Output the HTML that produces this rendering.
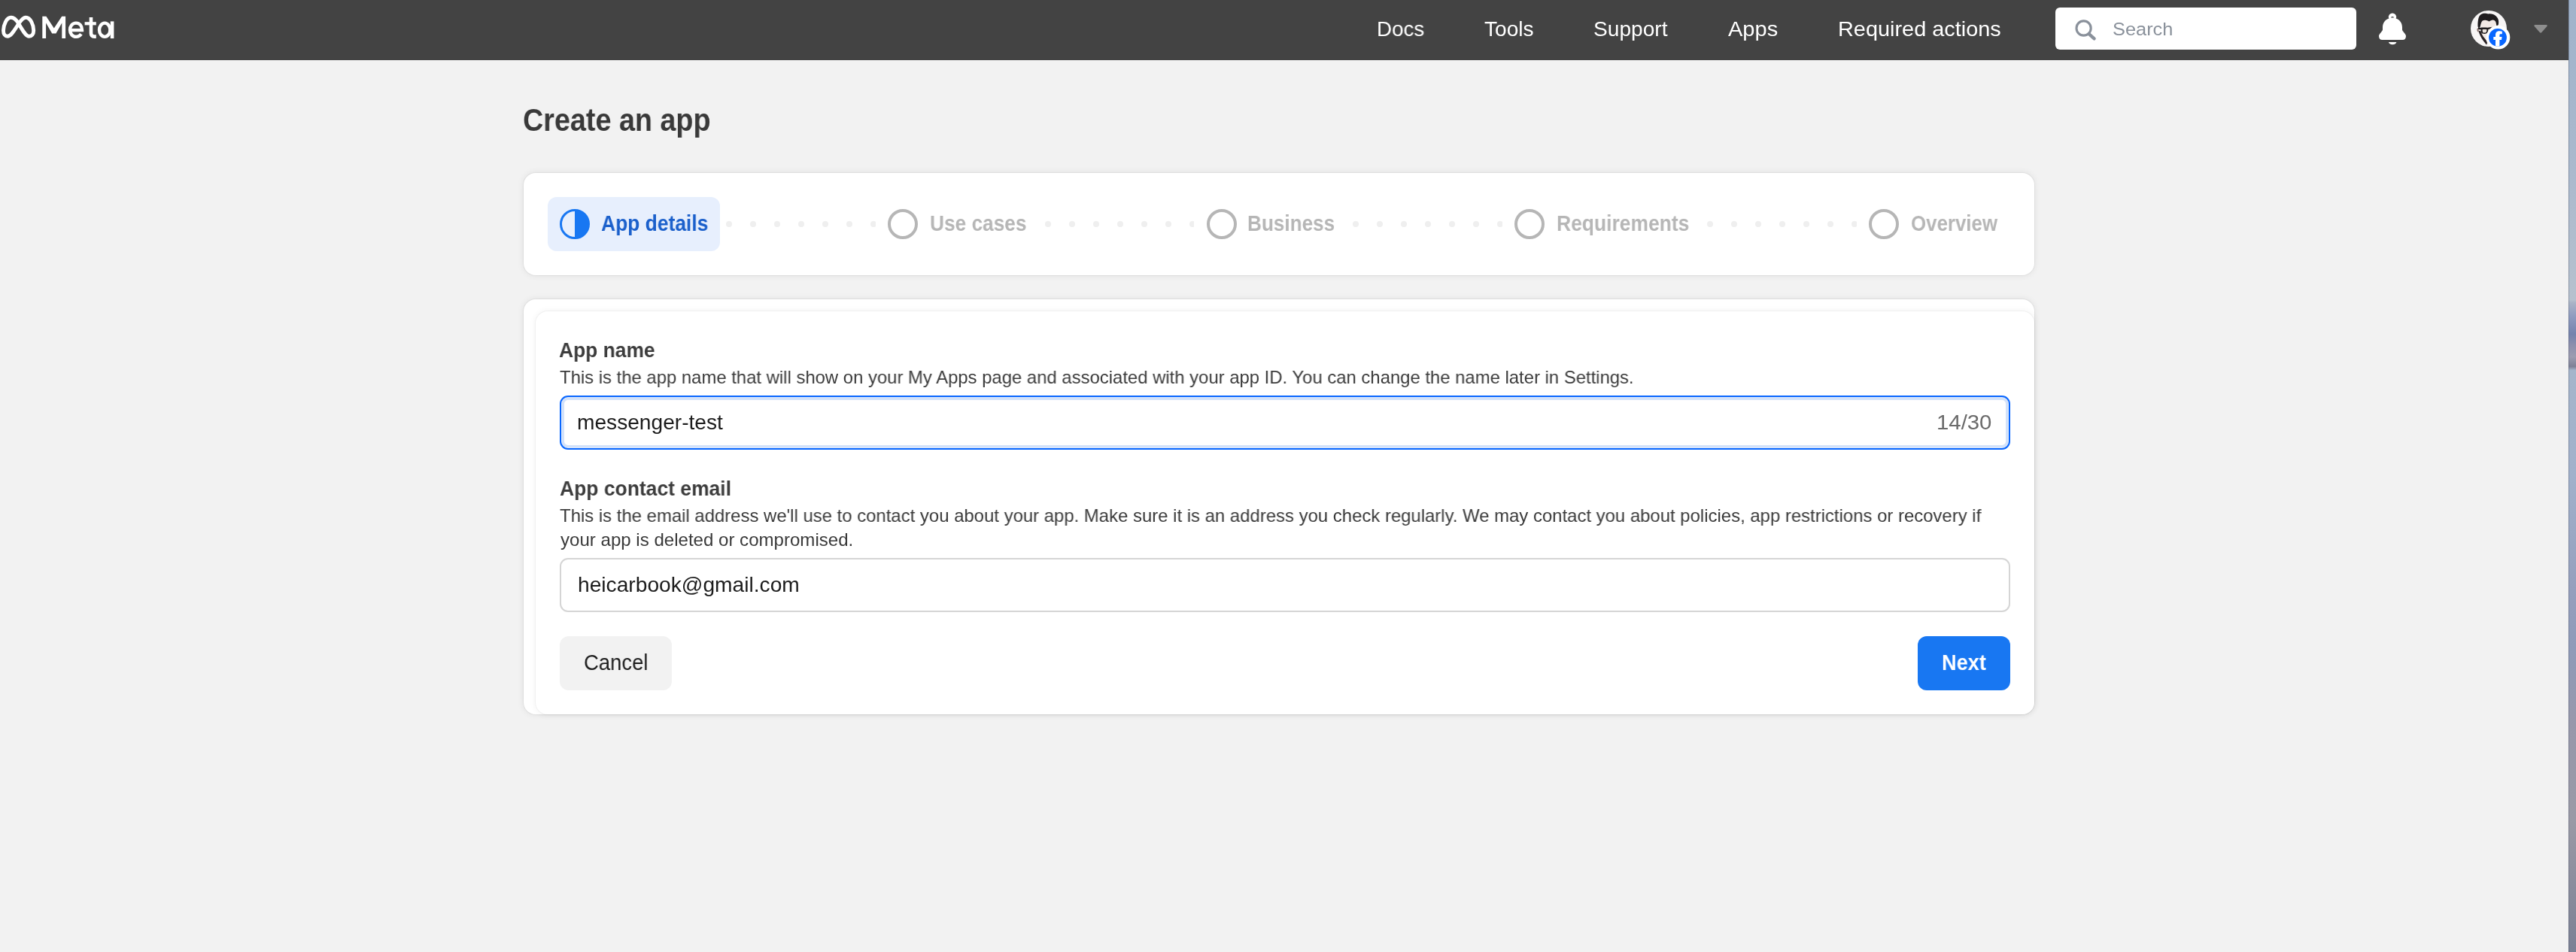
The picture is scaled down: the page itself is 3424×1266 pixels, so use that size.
<!DOCTYPE html>
<html><head><meta charset="utf-8">
<style>
*{box-sizing:border-box;margin:0;padding:0}
html,body{width:3424px;height:1266px;overflow:hidden;background:#f2f2f2;font-family:"Liberation Sans",sans-serif;position:relative}
.a{position:absolute;white-space:nowrap;line-height:0;transform-origin:0 0;will-change:transform}
.b{position:absolute}
#nav{position:absolute;left:0;top:0;width:3414px;height:80px;background:#434343}
#strip{position:absolute;left:3414px;top:0;width:10px;height:1266px;border-left:1px solid rgba(60,70,90,0.35);background:linear-gradient(180deg,#a0b3cb 0%,#aab9cd 18%,#b6c1ce 31.5%,#a9b3c6 31.8%,#8f9cc0 33.2%,#7583ad 35.1%,#8d90ad 36.3%,#9c9cb0 37.5%,#7d8096 38.5%,#a5b5cb 38.9%,#a1b1cb 50%,#959fbd 62%,#8f9bb9 68%,#9798ab 76%,#9a9aa6 86%,#7b8094 100%)}
.card{position:absolute;background:#fff;border-radius:16px;box-shadow:0 0 0 1px rgba(0,0,0,0.04),0 0 10px rgba(0,0,0,0.085)}
.inner{position:absolute;background:#fff;border-radius:16px;box-shadow:0 0 0 1px rgba(0,0,0,0.03),0 0 10px rgba(0,0,0,0.065)}
.ring{position:absolute;width:40px;height:40px;border:4px solid #b6b6b6;border-radius:50%}
.drow{position:absolute;top:293.8px;height:8px;overflow:hidden}
.drow i{position:absolute;top:0;width:8px;height:8px;border-radius:50%;background:#efefef}
</style></head><body>
<div id="nav"></div>
<div id="strip"></div>
<svg class="b" style="left:0;top:0" width="60" height="80" viewBox="0 0 60 80">
<path d="M10 48.3 C14.5 48.3 18 42 24.8 31.5 C28.5 26 31 23.2 34.3 23.2 C40.5 23.2 44.7 33 44.7 40.5 C44.7 45.5 42.2 48.3 38.8 48.3 C34.5 48.3 31 42 24.8 31.5 C21.5 26 18.5 23.3 14.7 23.3 C8.5 23.3 4.5 33.5 4.5 40.5 C4.5 45.5 7 48.3 10 48.3 Z" fill="none" stroke="#fff" stroke-width="4.9" stroke-linejoin="round"/>
</svg>
<svg class="b" style="left:50px;top:15px" width="110" height="45" viewBox="50 15 110 45">
<path d="M56.3 51.1 V21.7 H61.4 L71.8 37.6 L82.2 21.7 H87.1 V51.1 H82.3 V30.4 L74.4 44.4 H69.2 L61.1 30.4 V51.1 Z" fill="#fff"/>
<path d="M93.2 40.1 H109 C109 34.4 105.8 30.6 101 30.6 C96.1 30.6 93 34.8 93 39.8 C93 44.8 96.3 48.9 101.2 48.9 C104.1 48.6 106.4 47.4 107.9 45.2" fill="none" stroke="#fff" stroke-width="4.4"/>
<path d="M121 23 V44.3 C121 47.4 122.5 48.6 125.3 48.6 H127.8" fill="none" stroke="#fff" stroke-width="4.6"/>
<path d="M112.6 31.3 H127.8" fill="none" stroke="#fff" stroke-width="4.2"/>
<ellipse cx="139.2" cy="39.75" rx="7.2" ry="9.1" fill="none" stroke="#fff" stroke-width="4.4"/>
<path d="M149.1 28.4 V51.1" fill="none" stroke="#fff" stroke-width="4.6"/>
</svg>
<div class="a" style="left:1829.63px;top:39.2px;font-size:28px;font-weight:400;color:#fff;transform:scaleX(0.9912)">Docs</div>
<div class="a" style="left:1973.24px;top:39.2px;font-size:28px;font-weight:400;color:#fff;transform:scaleX(1.0049)">Tools</div>
<div class="a" style="left:2117.98px;top:39.2px;font-size:28px;font-weight:400;color:#fff;transform:scaleX(1.0041)">Support</div>
<div class="a" style="left:2297.15px;top:39.2px;font-size:28px;font-weight:400;color:#fff;transform:scaleX(1.0372)">Apps</div>
<div class="a" style="left:2443.08px;top:39.2px;font-size:28px;font-weight:400;color:#fff;transform:scaleX(1.0318)">Required actions</div>
<div class="b" style="left:2732px;top:10px;width:400px;height:56px;background:#fff;border-radius:6px"></div>
<svg class="b" style="left:2750px;top:18px" width="44" height="44" viewBox="0 0 44 44">
<circle cx="19.6" cy="19.5" r="9.6" fill="none" stroke="#8a919b" stroke-width="3.1"/>
<line x1="26.6" y1="27.2" x2="33.6" y2="33.4" stroke="#8a919b" stroke-width="4.4" stroke-linecap="round"/>
</svg>
<div class="a" style="left:2807.95px;top:39.2px;font-size:24.5px;font-weight:400;color:#8a919b;transform:scaleX(1.0362)">Search</div>
<svg class="b" style="left:3150px;top:10.8px" width="60" height="56" viewBox="0 0 60 56">
<circle cx="30" cy="11.6" r="5.2" fill="#fff"/>
<path d="M24.7 13.8 C20 15.5 17 20 17 25.5 L17 28.5 C17 30.5 12 34 12 37 C12 40 13.5 42 16.5 42 L43.5 42 C46.5 42 48 40 48 37 C48 34 43 30.5 43 28.5 L43 25.5 C43 20 40 15.5 35.3 13.8 Z" fill="#fff"/>
<path d="M28 12.6 A2 1.6 0 0 1 32 12.6 Z" fill="#434343"/>
<path d="M25 45 H35.3 C35.3 47 33 48.2 30.15 48.2 C27.3 48.2 25 47 25 45 Z" fill="#fff"/>
</svg>
<svg class="b" style="left:3284px;top:13.7px" width="48" height="48" viewBox="0 0 48 48">
<defs><clipPath id="av"><circle cx="24" cy="24" r="24"/></clipPath></defs>
<g clip-path="url(#av)">
<rect width="48" height="48" fill="#f7f5f5"/>
<path d="M14 12 C18 11 30 11 34.5 13 L34.5 30 C33 38 28 44 22 45 C17 41 14 34 13.5 28 Z" fill="#f2e9e5"/>
<path d="M9.5 21.2 C9.3 16 10 9 12.2 6.4 C14 4.5 16 3.7 17.6 3.7 C20 3.5 22 4.4 23.6 4.4 C26 4.2 28 4.5 29.7 5.1 C32 6 34 7.5 35 9.1 C36.5 11 37.2 13 37.1 14.5 C37.3 16 37 18 36.7 19.2 L34.4 20.5 C34 18 33.8 16 33 14.5 C32 13.2 31 12.5 29.7 12.5 C27.5 12.6 26 13.8 24.3 14.5 C22.5 13.6 20.5 12.6 18.9 12.8 C17 13 15.5 13.6 14.9 14.5 C13.8 16.5 13.2 19 12.8 21.2 L10.8 23.9 Z" fill="#1f1c1e"/>
<path d="M9.3 23.5 C12 22.6 18 22.2 22.5 22.8 C24.5 22.4 26.5 22 28.5 21.8 L28.5 24.2 L23.4 25 C23.2 27.5 22.8 29.2 21.8 30 C19.5 31.2 16 31.2 14.6 30 C13.8 28.8 13.6 26.8 13.5 25.2 L10 25.3 Z" fill="#1f1c1e"/>
<path d="M15.6 25.2 C17 24.8 20 24.8 21.4 25.3 C21.4 27 21.1 28.3 20.6 28.9 C19.3 29.6 17 29.6 16.1 28.9 C15.7 28 15.6 26.6 15.6 25.2 Z" fill="#ebe3dc"/>
<path d="M10.2 25.9 C11 27 12.5 27.2 13.6 27.3 C14.3 31 16 34 18.2 36.5 C19.8 38.3 21.5 40.5 22 43 L21 45.5 C18 42 15 38 12.8 33.5 C11.5 31 10.6 28.5 10.2 25.9 Z" fill="#2a2325"/>
<path d="M9 23.8 C8 24.5 8.2 27 9.6 28.6 L10.6 28.2 L10.2 24.5 Z" fill="#8a6f68"/>
</g>
</svg>
<svg class="b" style="left:3300px;top:30px" width="40" height="40" viewBox="0 0 40 40">
<defs><clipPath id="fb"><circle cx="20" cy="19.9" r="11.9"/></clipPath></defs>
<circle cx="20.5" cy="19.8" r="15.8" fill="#fff"/>
<circle cx="20" cy="19.9" r="11.9" fill="#0866ff"/>
<path clip-path="url(#fb)" d="M17 33 V23 H14.3 V19 H17 V16.5 C17 13 19 11.3 22.5 11.3 C23.8 11.3 25 11.5 25.8 11.7 V15.3 H24 C22.8 15.3 22.4 15.9 22.4 17 V19 H25.6 L25 23 H22.4 V33 Z" fill="#fff"/>
</svg>
<svg class="b" style="left:3364px;top:29px" width="26" height="18" viewBox="0 0 26 18">
<path d="M5.6 4 H20.6 C21.7 4 22.2 5.1 21.5 5.9 L14.1 14.3 C13.5 14.9 12.6 14.9 12 14.3 L4.7 5.9 C4 5.1 4.5 4 5.6 4 Z" fill="#8e8e8e"/>
</svg>

<div class="a" style="left:695.4px;top:160.3px;font-size:42.3px;font-weight:700;color:#393939;transform:scaleX(0.8917)">Create an app</div>

<div class="card" style="left:696px;top:230px;width:2008px;height:136px"></div>
<div class="b" style="left:728px;top:262px;width:229px;height:72px;border-radius:12px;background:#e7effd"></div>
<svg class="b" style="left:744px;top:278px" width="40" height="40" viewBox="0 0 40 40">
<circle cx="20" cy="20" r="18.5" fill="none" stroke="#1877f2" stroke-width="3"/>
<path d="M20 1.5 A18.5 18.5 0 0 1 20 38.5 Z" fill="#1877f2"/>
</svg>
<div class="a" style="left:799.21px;top:297.0px;font-size:28.6px;font-weight:700;color:#1a5fcb;transform:scaleX(0.9234)">App details</div>
<div class="ring" style="left:1180px;top:278px"></div>
<div class="a" style="left:1235.79px;top:297.0px;font-size:28.6px;font-weight:700;color:#b6b6b6;transform:scaleX(0.9182)">Use cases</div>
<div class="ring" style="left:1603.5px;top:278px"></div>
<div class="a" style="left:1658.25px;top:297.0px;font-size:28.6px;font-weight:700;color:#b6b6b6;transform:scaleX(0.9133)">Business</div>
<div class="ring" style="left:2013px;top:278px"></div>
<div class="a" style="left:2068.74px;top:297.0px;font-size:28.6px;font-weight:700;color:#b6b6b6;transform:scaleX(0.9247)">Requirements</div>
<div class="ring" style="left:2484px;top:278px"></div>
<div class="a" style="left:2540.09px;top:297.0px;font-size:28.6px;font-weight:700;color:#b6b6b6;transform:scaleX(0.9038)">Overview</div>
<div class="drow" style="left:965px;width:199px"><i style="left:0px"></i><i style="left:32px"></i><i style="left:64px"></i><i style="left:96px"></i><i style="left:128px"></i><i style="left:160px"></i><i style="left:192px"></i></div><div class="drow" style="left:1389px;width:198px"><i style="left:0px"></i><i style="left:32px"></i><i style="left:64px"></i><i style="left:96px"></i><i style="left:128px"></i><i style="left:160px"></i><i style="left:192px"></i></div><div class="drow" style="left:1798px;width:199px"><i style="left:0px"></i><i style="left:32px"></i><i style="left:64px"></i><i style="left:96px"></i><i style="left:128px"></i><i style="left:160px"></i><i style="left:192px"></i></div><div class="drow" style="left:2269px;width:199px"><i style="left:0px"></i><i style="left:32px"></i><i style="left:64px"></i><i style="left:96px"></i><i style="left:128px"></i><i style="left:160px"></i><i style="left:192px"></i></div>

<div class="card" style="left:696px;top:398px;width:2008px;height:552px"></div>
<div class="inner" style="left:712px;top:414px;width:1992px;height:536px"></div>
<div class="a" style="left:743.21px;top:465.8px;font-size:28px;font-weight:700;color:#3c3c3c;transform:scaleX(0.9422)">App name</div>
<div class="a" style="left:744.42px;top:501.6px;font-size:24px;font-weight:400;color:#3a3a3a;transform:scaleX(0.9945)">This is the app name that will show on your My Apps page and associated with your app ID. You can change the name later in Settings.</div>
<div class="b" style="left:744px;top:526px;width:1928px;height:72px;border-radius:11px;border:2px solid #0866ff;box-shadow:inset 0 0 0 0.5px #e6eefc,inset 0 0 0 4px #d3e2fa"></div>
<div class="a" style="left:767.17px;top:562.4px;font-size:28px;font-weight:400;color:#1c1c1c;transform:scaleX(1.0048)">messenger-test</div>
<div class="a" style="left:2573.84px;top:562.2px;font-size:28px;font-weight:400;color:#6b6b6b;transform:scaleX(1.0476)">14/30</div>
<div class="a" style="left:743.61px;top:650.0px;font-size:28px;font-weight:700;color:#3c3c3c;transform:scaleX(0.9452)">App contact email</div>
<div class="a" style="left:744.32px;top:685.8px;font-size:24px;font-weight:400;color:#3a3a3a;transform:scaleX(0.9961)">This is the email address we'll use to contact you about your app. Make sure it is an address you check regularly. We may contact you about policies, app restrictions or recovery if</div>
<div class="a" style="left:744.58px;top:717.9px;font-size:24px;font-weight:400;color:#3a3a3a;transform:scaleX(1.0026)">your app is deleted or compromised.</div>
<div class="b" style="left:744px;top:742px;width:1928px;height:72px;border-radius:11px;border:2px solid #d5d5d5;background:#fff"></div>
<div class="a" style="left:768.05px;top:777.8px;font-size:28px;font-weight:400;color:#1c1c1c;transform:scaleX(1.0061)">heicarbook@gmail.com</div>
<div class="b" style="left:744px;top:846px;width:149px;height:72px;border-radius:12px;background:#f2f2f2"></div>
<div class="a" style="left:775.53px;top:880.9px;font-size:29.2px;font-weight:400;color:#1c1c1c;transform:scaleX(0.9407)">Cancel</div>
<div class="b" style="left:2549px;top:846px;width:123px;height:72px;border-radius:12px;background:#1877f2"></div>
<div class="a" style="left:2581.21px;top:881.0px;font-size:29px;font-weight:700;color:#ffffff;transform:scaleX(0.9363)">Next</div>
</body></html>
